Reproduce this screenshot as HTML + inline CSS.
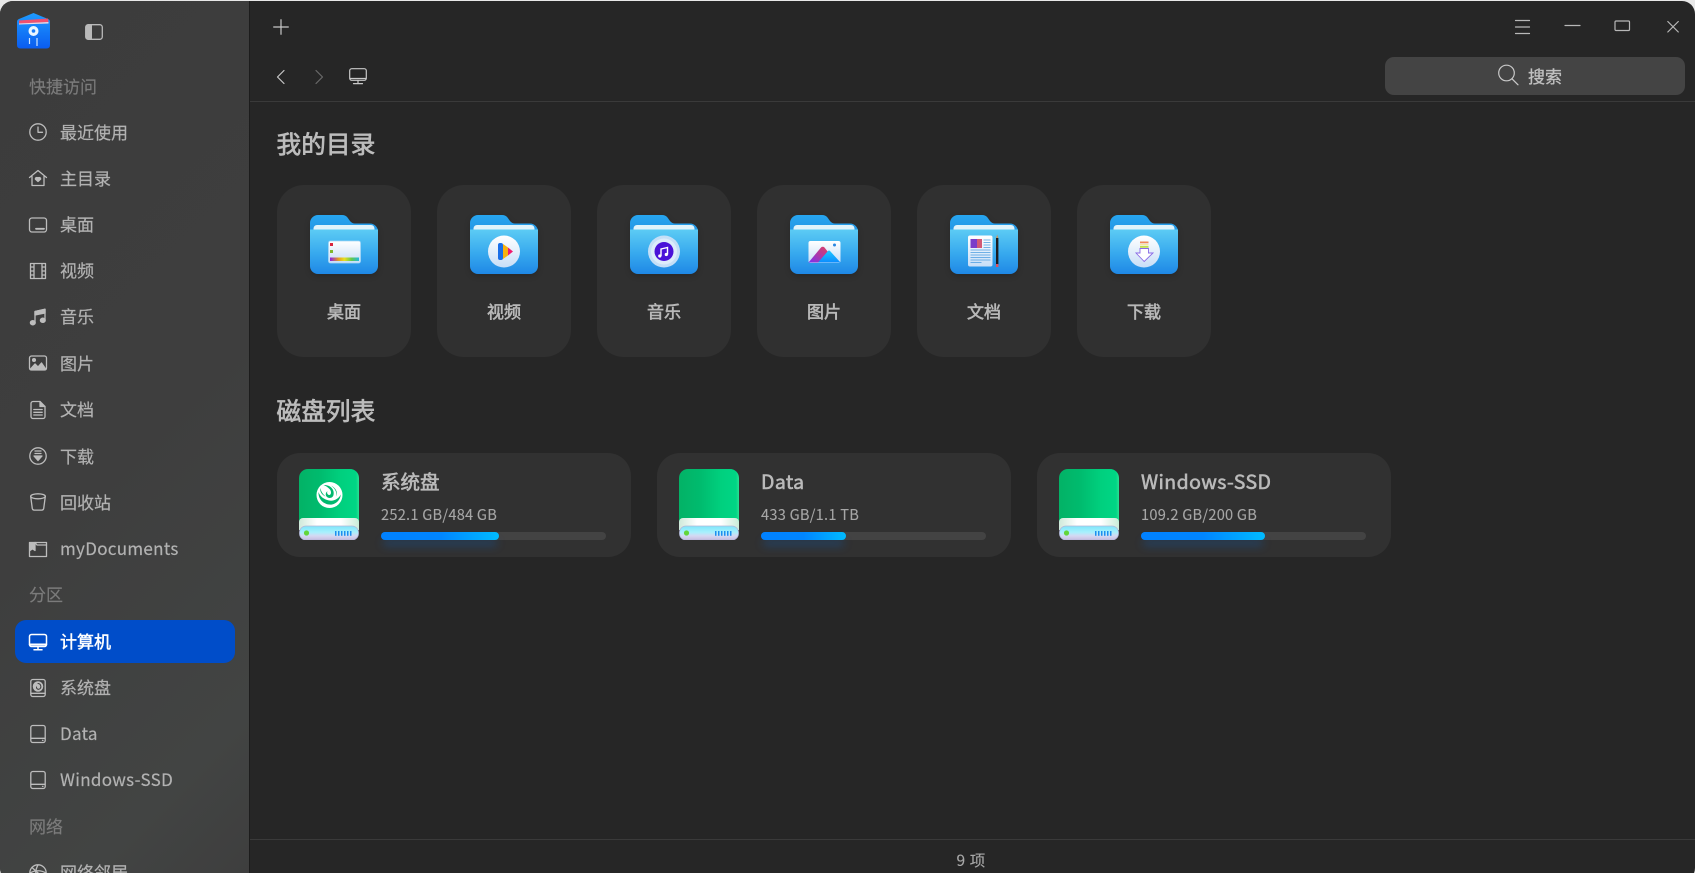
<!DOCTYPE html>
<html lang="zh"><head><meta charset="utf-8"><title>文件管理器</title>
<style>
*{box-sizing:border-box}
html,body{margin:0;width:1695px;height:873px;overflow:hidden;background:#e8e8e8}
body{font-family:"Noto Sans CJK SC","Liberation Sans",sans-serif;position:relative}
#win{position:absolute;left:0;top:1px;width:1695px;height:880px;background:#262626;border-radius:13px;overflow:hidden}
#side{position:absolute;left:0;top:-1px;width:250px;height:881px;background:linear-gradient(135deg,#3c3c3c 0%,#3e3e3e 50%,#424443 85%,#3e3e3e 100%);border-right:1px solid #1c1c1c}
.p{position:absolute;white-space:nowrap}
.nav{left:60px;font-size:17px;line-height:24px;height:24px;color:#b2b2b2;-webkit-text-stroke:.2px #b2b2b2}
.lat{letter-spacing:.3px}
.sec{left:29px;font-size:17px;line-height:24px;height:24px;color:#7b7b7b;-webkit-text-stroke:.15px #7b7b7b}
.ic{position:absolute;left:28px;width:20px;height:20px;fill:none;stroke:#bdbdbd;stroke-width:1.3;stroke-linecap:round;stroke-linejoin:round}
.h{left:276.500px;font-size:24.700px;line-height:34px;color:#bcbcbc;-webkit-text-stroke:.7px #bcbcbc}
.card{position:absolute;top:185px;width:134px;height:172px;border-radius:27px;background:#303030}
.card svg{position:absolute;left:33px;top:30px;filter:drop-shadow(0 2px 3px rgba(0,0,0,.18))}
.card span{position:absolute;left:0;right:0;top:114px;line-height:24px;text-align:center;font-size:17px;color:#b8b8b8;-webkit-text-stroke:.6px #b8b8b8}
.disk{position:absolute;top:453px;width:354px;height:104px;border-radius:23px;background:#313131}
.disk svg{position:absolute;left:22px;top:15px}
.disk b{position:absolute;left:104px;top:14px;font-size:19.500px;line-height:28px;font-weight:400;color:#bababa;-webkit-text-stroke:.6px #bababa;white-space:nowrap}
.disk b.lat{letter-spacing:.4px}
.disk i{position:absolute;left:104px;top:51px;font-style:normal;font-size:14.600px;letter-spacing:.25px;line-height:22px;color:#a6a6a6;-webkit-text-stroke:.1px #a6a6a6;white-space:nowrap}
.bar{position:absolute;left:104px;top:79px;width:225px;height:8px;border-radius:4px;background:#434343}
.fill{position:absolute;left:0;top:0;height:8px;border-radius:4px;background:linear-gradient(90deg,#0081ff 0%,#0085ff 50%,#00bbff 100%);box-shadow:0 7px 9px -2px rgba(0,110,230,.45)}
.tb{position:absolute;fill:none;stroke:#c8c8c8;stroke-width:1.2;stroke-linecap:round;stroke-linejoin:round}
</style></head><body>
<svg width="0" height="0" style="position:absolute"><defs>
<linearGradient id="fb" x1="0" y1="0" x2="0" y2="1"><stop offset="0" stop-color="#27a6f0"/><stop offset="1" stop-color="#1f7fd4"/></linearGradient>
<linearGradient id="ff" x1="0" y1="0" x2="0" y2="1"><stop offset="0" stop-color="#5ccbf4"/><stop offset=".55" stop-color="#36a8ee"/><stop offset="1" stop-color="#1f88e6"/></linearGradient>
<linearGradient id="ws" x1="0" y1="0" x2="0" y2="1"><stop offset="0" stop-color="#fff"/><stop offset="1" stop-color="#c7def7"/></linearGradient>
<linearGradient id="rb" x1="0" y1="0" x2="1" y2="0"><stop offset="0" stop-color="#8a1fe0"/><stop offset=".3" stop-color="#e8a020"/><stop offset=".5" stop-color="#e8e020"/><stop offset=".75" stop-color="#60c850"/><stop offset="1" stop-color="#20b8e0"/></linearGradient>
<linearGradient id="dg" x1="0" y1="0" x2="1" y2="0"><stop offset="0" stop-color="#03b266"/><stop offset=".35" stop-color="#00bb6e"/><stop offset=".7" stop-color="#00d07e"/><stop offset=".95" stop-color="#00d685"/><stop offset="1" stop-color="#2be092"/></linearGradient>
<linearGradient id="dw" x1="0" y1="0" x2="1" y2="0"><stop offset="0" stop-color="#cfe9da"/><stop offset=".3" stop-color="#fff"/><stop offset=".7" stop-color="#fff"/><stop offset="1" stop-color="#c8ecd9"/></linearGradient>
<linearGradient id="dc" x1="0" y1="0" x2="0" y2="1"><stop offset="0" stop-color="#7fe6fb"/><stop offset=".45" stop-color="#a8f0fc"/><stop offset=".7" stop-color="#d4d8f2"/><stop offset="1" stop-color="#c6bce0"/></linearGradient>
<linearGradient id="lg" x1="0" y1="0" x2="0" y2="1"><stop offset="0" stop-color="#1e9bff"/><stop offset="1" stop-color="#0a5cf0"/></linearGradient>
<linearGradient id="pm" x1="0" y1="1" x2="1" y2="0"><stop offset="0" stop-color="#7a30f0"/><stop offset="1" stop-color="#e04060"/></linearGradient>
<linearGradient id="pb" x1="0" y1="0" x2="0" y2="1"><stop offset="0" stop-color="#20c8ff"/><stop offset="1" stop-color="#0a8cff"/></linearGradient>
<g id="folder">
<path d="M0 8a8 8 0 0 1 8-8h24q3.500 0 5.500 2.500l2.500 3.500q2 2.500 5 2.500h15a8 8 0 0 1 8 8v20H0z" fill="url(#fb)"/>
<path d="M3.500 15v-1.500a3.500 3.500 0 0 1 3.500-3.500h54a3.500 3.500 0 0 1 3.500 3.500V15z" fill="#dff3fb"/>
<path d="M0 14.500h68V51a8 8 0 0 1-8 8H8a8 8 0 0 1-8-8z" fill="url(#ff)"/>
</g>
<g id="drive">
<path d="M0 10a9 9 0 0 1 9-9h42a9 9 0 0 1 9 9v44H0z" fill="url(#dg)"/>
<path d="M0 54a4 4 0 0 1 4-4h52a4 4 0 0 1 4 4v8H0z" fill="url(#dw)"/>
<rect x=".5" y="58" width="59" height="14" rx="6.500" fill="url(#dc)" stroke="#b3b8d8" stroke-width=".8"/>
<circle cx="7.500" cy="65" r="2.600" fill="#63d63a"/>
<g fill="#1b8ff0"><rect x="36" y="63" width="1.500" height="4.800"/><rect x="39" y="63" width="1.500" height="4.800"/><rect x="42" y="63" width="1.500" height="4.800"/><rect x="45" y="63" width="1.500" height="4.800"/><rect x="48" y="63" width="1.500" height="4.800"/><rect x="51" y="63" width="1.500" height="4.800"/></g>
</g>
</defs></svg>

<div id="win">
<div style="position:absolute;left:250px;right:0;top:100px;height:1px;background:#3a3a3a"></div>
<div style="position:absolute;left:250px;right:0;top:838px;height:1px;background:#3a3a3a"></div>
</div>
<div id="win2" style="position:absolute;left:0;top:1px;width:1695px;height:880px;border-radius:13px;overflow:hidden">
<div id="side">

<svg class="p" style="left:17px;top:13px" width="33" height="36" viewBox="0 0 33 36"><path d="M2 6L16.500 0 31 6q2 .8 2 3v23q0 3.500-3.500 3.500h-26Q0 35.500 0 32V9q0-2.200 2-3z" fill="url(#lg)"/><path d="M2 7.500L31 5.500 31.500 9 2 10.500z" fill="#f0506e"/><path d="M2 10.500l29.500-1.500v1.500L2 11.500z" fill="#f3d7de"/><circle cx="16.500" cy="18" r="5" fill="#eaf6ff"/><circle cx="16.500" cy="18" r="1.800" fill="#1b7cf5"/><path d="M12.500 25v6M20 25v8" stroke="#cfe6ff" stroke-width="1.200"/></svg>
<svg class="p" style="left:85px;top:24px" width="18" height="16" viewBox="0 0 18 16"><rect x=".7" y=".7" width="16.600" height="14.600" rx="2.500" fill="none" stroke="#b9b9b9" stroke-width="1.300"/><path d="M1 3a2 2 0 0 1 2-2h4v14H3a2 2 0 0 1-2-2z" fill="#b9b9b9"/></svg>

<div class="p sec" style="top:74px">快捷访问</div>

<svg class="ic" style="top:122px" viewBox="0 0 20 20"><circle cx="10" cy="10" r="8.200"/><path d="M10 5v5.300h4.500"/></svg>
<div class="p nav" style="top:120px">最近使用</div>

<svg class="ic" style="top:168px" viewBox="0 0 20 20"><path d="M1.500 9.500L10 2.500l8.500 7M4 8.500V17.500h12V8.500"/><path d="M10 13.500l-2.600-2.300a1.500 1.500 0 0 1 2.600-1.200 1.500 1.500 0 0 1 2.600 1.200z" fill="#bdbdbd"/></svg>
<div class="p nav" style="top:166px">主目录</div>

<svg class="ic" style="top:215px" viewBox="0 0 20 20"><rect x="1.500" y="3" width="17" height="14" rx="2.500"/><path d="M8 13.800h8" stroke-width="1.800"/></svg>
<div class="p nav" style="top:212px">桌面</div>

<svg class="ic" style="top:261px" viewBox="0 0 20 20"><path d="M2.500 2.500h15v15h-15zM6 2.500v15M14 2.500v15M2.500 6H6M2.500 10H6M2.500 14H6M14 6h3.500M14 10h3.500M14 14h3.500"/></svg>
<div class="p nav" style="top:258px">视频</div>

<svg class="ic" style="top:307px" viewBox="0 0 20 20"><path d="M7 15.500V4.500l10-2.200v10.800"/><path d="M7 4.500l10-2.200V6L7 8z" fill="#bdbdbd"/><ellipse cx="4.800" cy="15.700" rx="2.400" ry="2.100" fill="#bdbdbd"/><ellipse cx="14.800" cy="13.300" rx="2.400" ry="2.100" fill="#bdbdbd"/></svg>
<div class="p nav" style="top:304px">音乐</div>

<svg class="ic" style="top:353px" viewBox="0 0 20 20"><rect x="1.500" y="3" width="17" height="14" rx="2"/><path d="M2 16.500l5-5.500 3 3 3.500-4 4.500 6.500z" fill="#bdbdbd"/><circle cx="6" cy="7" r="1.400" fill="#bdbdbd"/></svg>
<div class="p nav" style="top:351px">图片</div>

<svg class="ic" style="top:400px" viewBox="0 0 20 20"><path d="M3 3.500a2 2 0 0 1 2-2h7l5 5v10a2 2 0 0 1-2 2H5a2 2 0 0 1-2-2z"/><path d="M12 1.500v5h5" fill="#bdbdbd"/><path d="M5.800 9.500h8.400M5.800 12.300h8.400M5.800 15h8.400"/></svg>
<div class="p nav" style="top:397px">文档</div>

<svg class="ic" style="top:446px" viewBox="0 0 20 20"><circle cx="10" cy="10" r="8.200"/><path d="M7 5h6M7 7.500h6"/><path d="M6 10h8l-4 4.500z" fill="#bdbdbd"/></svg>
<div class="p nav" style="top:444px">下载</div>

<svg class="ic" style="top:492px" viewBox="0 0 20 20"><ellipse cx="10" cy="4.300" rx="7.300" ry="2.500"/><path d="M2.700 4.500l1.600 12a2 2 0 0 0 2 1.600h7.400a2 2 0 0 0 2-1.600l1.600-12"/></svg>
<div class="p nav" style="top:490px">回收站</div>

<svg class="ic" style="top:539px" viewBox="0 0 20 20"><path d="M1.500 3.500h17v14h-17z"/><path d="M2 4h5v7.500L4.500 9.800 2 11.500z" fill="#bdbdbd"/><path d="M7 3.500l2 2.500h9.500"/></svg>
<div class="p nav lat" style="top:536px">myDocuments</div>

<div class="p sec" style="top:582px">分区</div>

<div class="p" style="left:15px;top:620px;width:220px;height:43px;border-radius:11px;background:#004dc9"></div>
<svg class="ic" style="top:632px;stroke:#fff;stroke-width:1.500" viewBox="0 0 20 20"><rect x="1.500" y="2.500" width="17" height="12" rx="2" fill="none"/><path d="M1.800 12.500h16.400" stroke-width="2"/><path d="M10 15v2M6 17.700h8"/></svg>
<div class="p nav" style="top:629px;color:#fff;-webkit-text-stroke:.45px #fff">计算机</div>

<svg class="ic" style="top:678px" viewBox="0 0 20 20"><rect x="2.800" y="1.500" width="14.400" height="17" rx="2"/><path d="M3 15.300h14"/><circle cx="10" cy="8.500" r="4.600" fill="#bdbdbd"/><path d="M10 5.500a3 3 0 0 1 1.500 5.500 2 2 0 0 1-3-2" stroke="#3e3e3e" stroke-width="1"/></svg>
<div class="p nav" style="top:675px">系统盘</div>

<svg class="ic" style="top:724px" viewBox="0 0 20 20"><rect x="2.800" y="1.500" width="14.400" height="17" rx="2"/><path d="M3 14.300h14M14.500 16.400h.5"/></svg>
<div class="p nav lat" style="top:721px">Data</div>

<svg class="ic" style="top:770px" viewBox="0 0 20 20"><rect x="2.800" y="1.500" width="14.400" height="17" rx="2"/><path d="M3 14.300h14M14.500 16.400h.5"/></svg>
<div class="p nav lat" style="top:767px">Windows-SSD</div>

<div class="p sec" style="top:814px">网络</div>

<svg class="ic" style="top:863px" viewBox="0 0 20 20"><circle cx="10" cy="10" r="8.200"/><path d="M4 4.500l12 11M10 2C7 7 7 13 10 18M2 10c5-3 11-3 16 0"/></svg>
<div class="p nav" style="top:860px">网络邻居</div>
</div>

<!-- toolbar -->
<svg class="tb" style="left:273px;top:18px" width="16" height="16" viewBox="0 0 16 16"><path d="M8 .7v14.600M.7 8h14.600"/></svg>
<svg class="tb" style="left:276px;top:68px" width="10" height="16" viewBox="0 0 10 16"><path d="M8 1.500L1.500 8 8 14.500"/></svg>
<svg class="tb" style="left:314px;top:68px;stroke:#6a6a6a" width="10" height="16" viewBox="0 0 10 16"><path d="M2 1.500L8.500 8 2 14.500"/></svg>
<svg class="tb" style="left:349px;top:67px" width="18" height="17" viewBox="0 0 18 17"><rect x=".7" y=".7" width="16.600" height="11.600" rx="2"/><path d="M1 10.500h16M9 12.500v2.500M4.500 15.600h9"/></svg>

<svg class="tb" style="left:1514px;top:18px;stroke:#b8b8b8" width="18" height="16" viewBox="0 0 18 16"><path d="M1.500 1.500h14M1.500 8h14M1.500 14.500h14"/></svg>
<svg class="tb" style="left:1564px;top:23px;stroke:#b8b8b8" width="18" height="4" viewBox="0 0 18 4"><path d="M1 1.500h15"/></svg>
<svg class="tb" style="left:1614px;top:19px;stroke:#b8b8b8" width="18" height="12" viewBox="0 0 18 12"><rect x="1" y="1" width="14.500" height="9.500" rx="1"/></svg>
<svg class="tb" style="left:1665px;top:19px;stroke:#b8b8b8" width="16" height="14" viewBox="0 0 14 14"><path d="M1.800 1.500l10.500 10.500M12.300 1.500L1.800 12"/></svg>

<div class="p" style="left:1385px;top:56px;width:300px;height:38px;border-radius:9px;background:#444"></div>
<svg class="tb" style="left:1497px;top:63px" width="23" height="23" viewBox="0 0 23 23"><circle cx="9.500" cy="9" r="7.800"/><path d="M15 14.800l6 6"/></svg>
<div class="p" style="left:1528px;top:63px;font-size:17px;line-height:24px;color:#c0c0c0;-webkit-text-stroke:.3px #c0c0c0">搜索</div>

<div class="p h" style="top:125px">我的目录</div>
<div class="p h" style="top:392px">磁盘列表</div>

<!-- cards -->
<div class="card" style="left:277px;top:184px"><svg width="68" height="59" viewBox="0 0 68 59" style="overflow:visible"><use href="#folder"/>
<rect x="18.500" y="26" width="32" height="22" rx="2" fill="url(#ws)" stroke="#a6d6f6" stroke-width=".8"/><rect x="20" y="28" width="3" height="3" fill="#d8243c"/><rect x="20" y="35" width="3" height="3" fill="#80b82c"/><rect x="20" y="42.500" width="29" height="3.500" fill="url(#rb)"/></svg><span>桌面</span></div>

<div class="card" style="left:437px;top:184px"><svg width="68" height="59" viewBox="0 0 68 59" style="overflow:visible"><use href="#folder"/>
<circle cx="34" cy="36.500" r="16" fill="url(#ws)"/><rect x="28" y="28" width="5" height="17" rx="2" fill="#1a6fe8"/><path d="M33 29l5 3.500v8L33 44z" fill="#f9b10e"/><path d="M38 32.500l5 4-5 4z" fill="#f0196e"/></svg><span>视频</span></div>

<div class="card" style="left:597px;top:184px"><svg width="68" height="59" viewBox="0 0 68 59" style="overflow:visible"><use href="#folder"/>
<circle cx="34" cy="36.500" r="16" fill="#c4dff7"/><circle cx="34" cy="36.500" r="13" fill="#dcecfb"/><circle cx="34" cy="36.500" r="9.500" fill="#4a12d8"/><path d="M31 41v-7l6.500-1.500V39.500" fill="none" stroke="#fff" stroke-width="1.400"/><circle cx="29.800" cy="41" r="1.600" fill="#fff"/><circle cx="36.300" cy="39.500" r="1.600" fill="#fff"/></svg><span>音乐</span></div>

<div class="card" style="left:757px;top:184px"><svg width="68" height="59" viewBox="0 0 68 59" style="overflow:visible"><use href="#folder"/>
<rect x="18.500" y="26" width="32" height="22" rx="2" fill="url(#ws)"/><circle cx="44.500" cy="30" r="1.500" fill="#2a86e0"/><path d="M18.500 47.500l12.500-15a2.500 2.500 0 0 1 3.500 0l3.500 4.500-8 10.500z" fill="url(#pm)"/><path d="M28 47.500l10-11.500a1.500 1.500 0 0 1 2 0l10.500 11.500z" fill="url(#pb)"/></svg><span>图片</span></div>

<div class="card" style="left:917px;top:184px"><svg width="68" height="59" viewBox="0 0 68 59" style="overflow:visible"><use href="#folder"/>
<rect x="18" y="20.500" width="24.500" height="31" rx="2" fill="url(#ws)"/><rect x="20.500" y="24" width="11.500" height="9" fill="#7a3cc8"/><rect x="27" y="24" width="5" height="9" fill="#e86060" opacity=".8"/><path d="M33.500 25h7M33.500 27.500h7M33.500 30h7M33.500 32.500h7M20.500 35h20M20.500 37.500h20M20.500 40h20M20.500 42.500h20M20.500 45h20M20.500 47.500h11" stroke="#4a9ce0" stroke-width=".8"/><rect x="46" y="23" width="2.400" height="27" fill="#1c1c20"/><path d="M46 23l1.200-3.500L48.400 23z" fill="#c89860"/><rect x="46" y="49" width="2.400" height="3" fill="#e05060"/></svg><span>文档</span></div>

<div class="card" style="left:1077px;top:184px"><svg width="68" height="59" viewBox="0 0 68 59" style="overflow:visible"><use href="#folder"/>
<circle cx="34" cy="36.500" r="16" fill="url(#ws)"/><rect x="30" y="26.500" width="8.500" height="1.800" fill="#f08a5a"/><rect x="30" y="29" width="8.500" height="1.500" fill="#f6e9a0"/><rect x="30" y="31" width="8.500" height="1.800" fill="#bfe050"/><path d="M30 33.500h8.500V38h4.500L34.200 46.500 26 38h4z" fill="#fff" stroke="#8a6ae6" stroke-width=".9"/></svg><span>下载</span></div>

<!-- disks -->
<div class="disk" style="left:277px;top:452px"><svg width="60" height="72" viewBox="0 0 60 72"><use href="#drive"/>
<circle cx="30.500" cy="27" r="13" fill="#fff"/>
<path d="M19.500 24C19 32 26 37.500 33 36.500 38 35.500 41.500 31 41.800 26.500 39.500 31 34.500 33.500 30 32.500 25 31.500 21 28.500 19.500 24z" fill="#00b86e"/>
<path d="M24.500 17C30.500 16.500 36 21 34.500 27 33.500 30.500 29.500 30.800 27.500 28.500 26 26.500 27 24 28.500 23.200 27.500 24.800 28.500 27 30.500 27 32.500 26.500 32.500 23 30.500 21 28.500 19 26.500 17.800 24.500 17z" fill="#00b86e"/>
<path d="M32 17.500C37 20 39 24.500 37.500 28.500 38 24 36 20.500 32 17.500zM21.500 20C20.500 23.500 23 27 26.500 28.500 23.800 26 22 23.500 21.500 20z" fill="#00b86e"/></svg><b>系统盘</b><i>252.1 GB/484 GB</i><div class="bar"><div class="fill" style="width:118px"></div></div></div>

<div class="disk" style="left:657px;top:452px"><svg width="60" height="72" viewBox="0 0 60 72"><use href="#drive"/></svg><b class="lat">Data</b><i>433 GB/1.1 TB</i><div class="bar"><div class="fill" style="width:85px"></div></div></div>

<div class="disk" style="left:1037px;top:452px"><svg width="60" height="72" viewBox="0 0 60 72"><use href="#drive"/></svg><b class="lat">Windows-SSD</b><i>109.2 GB/200 GB</i><div class="bar"><div class="fill" style="width:124px"></div></div></div>

<div class="p" style="left:956.500px;top:848px;font-size:15.500px;letter-spacing:.6px;line-height:22px;color:#a8a8a8;-webkit-text-stroke:.1px #a8a8a8">9 项</div>
</div>
</body></html>
